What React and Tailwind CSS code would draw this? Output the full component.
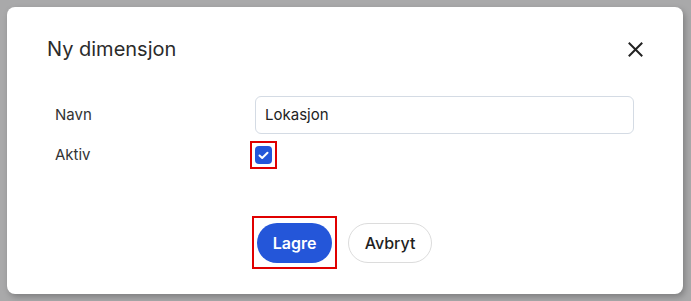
export default function App() {
  return (
    <div
      className="w-[691px] h-[301px] bg-[#a9a9aa] pt-[7px] pl-[7px] overflow-hidden"
      style={{ fontFamily: 'Inter, "Noto Sans", sans-serif' }}
    >
      <div className="w-[676px] h-[287px] bg-white rounded-[8px] shadow-[2px_3px_6px_rgba(0,0,0,0.25)] flex flex-col">
        <div className="flex items-center justify-between pl-[40px] pr-[40px] pt-[28px] h-[56px]">
          <h2 className="text-[20px] leading-[28px] text-[#2b2b2b] font-normal">Ny dimensjon</h2>
          <svg width="15" height="15" viewBox="0 0 15 15" className="text-[#222]">
            <path d="M1.5 1.5 L13.5 13.5 M13.5 1.5 L1.5 13.5" stroke="currentColor" strokeWidth="2" strokeLinecap="square" />
          </svg>
        </div>
        <div className="pl-[48px] pr-[49px] mt-[33px] flex flex-col">
          <div className="flex items-center h-[38px]">
            <div className="w-[200px] text-[15px] text-[#333]">Navn</div>
            <div className="flex-1 h-[38px] border border-[#d4dbe4] rounded-[6px] flex items-center pl-[9px] text-[15px] text-[#222]">
              Lokasjon
            </div>
          </div>
          <div className="flex items-center mt-[7px] h-[28px]">
            <div className="w-[195px] text-[15px] text-[#333]">Aktiv</div>
            <div className="border-2 border-[#e00000] p-[3px] w-[27px] h-[28px]">
              <div className="w-[17px] h-[18px] rounded-[4px] bg-[#2456d9] flex items-center justify-center">
                <svg width="11" height="9" viewBox="0 0 11 9">
                  <path d="M1.5 4.5 L4.2 7 L9.5 1.8" stroke="white" strokeWidth="2" fill="none" strokeLinecap="round" strokeLinejoin="round" />
                </svg>
              </div>
            </div>
          </div>
        </div>
        <div className="flex justify-center items-center gap-[11px] mt-[47px] pr-[6px]">
          <div className="border-2 border-[#e00000] px-[3px] pt-[5px] pb-[4px]">
            <button className="h-[40px] w-[75px] rounded-full bg-[#2456d9] text-white text-[16px] font-semibold">
              Lagre
            </button>
          </div>
          <button className="h-[40px] w-[84px] rounded-full bg-white border border-[#dcdcdc] text-[#1f1f1f] text-[16px] font-medium">
            Avbryt
          </button>
        </div>
      </div>
    </div>
  );
}
